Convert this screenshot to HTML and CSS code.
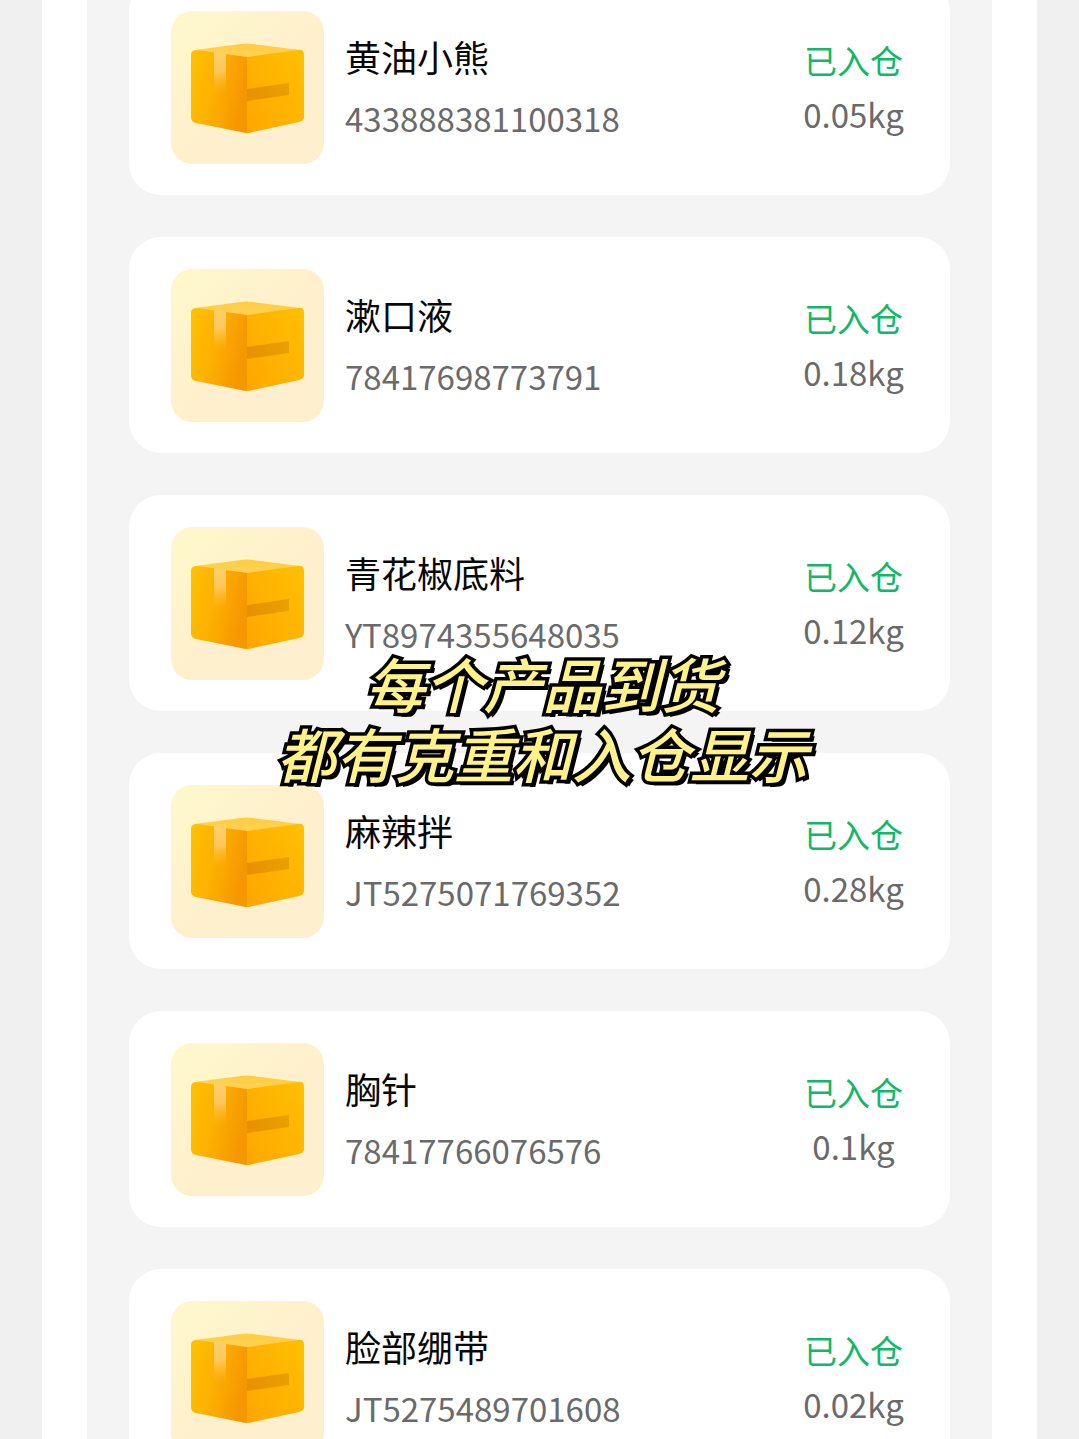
FILE: index.html
```html
<!DOCTYPE html>
<html lang="zh-CN">
<head>
<meta charset="utf-8">
<meta name="viewport" content="width=device-width, initial-scale=1">
<title>包裹列表</title>
<link rel="stylesheet" href="styles.css">
</head>
<body>
<svg class="sprite" aria-hidden="true">
  <defs>
    <linearGradient id="tile" x1="0" y1="0" x2="1" y2="1">
      <stop offset="0" stop-color="#fff8cb"/><stop offset="0.3" stop-color="#fef4cc"/><stop offset="0.55" stop-color="#feefcd"/><stop offset="1" stop-color="#feefd0"/>
    </linearGradient>
    <linearGradient id="left" x1="0" y1="0" x2="1" y2="0.3">
      <stop offset="0" stop-color="#ffc200"/><stop offset="0.5" stop-color="#fdb000"/><stop offset="1" stop-color="#f59800"/>
    </linearGradient>
    <linearGradient id="right" x1="1" y1="0.2" x2="0" y2="1">
      <stop offset="0" stop-color="#ffbe00"/><stop offset="1" stop-color="#ffa600"/>
    </linearGradient>
    <linearGradient id="top" x1="0.6" y1="0" x2="0.35" y2="1">
      <stop offset="0" stop-color="#ffcc40"/><stop offset="1" stop-color="#ffd55c"/>
    </linearGradient>
    <linearGradient id="tape" x1="0" y1="0" x2="0" y2="1">
      <stop offset="0" stop-color="#ffcf70"/><stop offset="0.45" stop-color="#ffcb68" stop-opacity="0.85"/><stop offset="1" stop-color="#fdb515" stop-opacity="0"/>
    </linearGradient>
    <linearGradient id="label" x1="0" y1="0" x2="1" y2="0">
      <stop offset="0" stop-color="#e89000"/><stop offset="1" stop-color="#e9a000"/>
    </linearGradient>
  </defs>
  <symbol id="box" viewBox="0 0 153 153">
    <rect width="153" height="153" rx="21" fill="url(#tile)"/>
    <path d="M24 39L70 33Q76 32 82 33L129 39L76 50Z" fill="url(#top)"/>
    <path d="M76 46V122Q73 122 70 121L25 112Q20 111 20 106V44Q20 39 26 39Z" fill="url(#left)"/>
    <path d="M76 46L127 39Q133 38 133 44V106Q133 110 128 111L82 121Q79 122 76 122Z" fill="url(#right)"/>
    <path d="M43 41L55 43V83H43Z" fill="url(#tape)"/>
    <path d="M76 78L118 72V84L76 90Z" fill="url(#label)"/>
  </symbol>
</svg>
<main class="screen">
  <ul class="parcels">
    <li class="parcel">
      <svg class="thumb" aria-hidden="true"><use href="#box"/></svg>
      <div class="info"><h2 class="name">黄油小熊</h2><p class="code">433888381100318</p></div>
      <div class="state"><p class="status">已入仓</p><p class="weight">0.05kg</p></div>
    </li>
    <li class="parcel">
      <svg class="thumb" aria-hidden="true"><use href="#box"/></svg>
      <div class="info"><h2 class="name">漱口液</h2><p class="code">78417698773791</p></div>
      <div class="state"><p class="status">已入仓</p><p class="weight">0.18kg</p></div>
    </li>
    <li class="parcel">
      <svg class="thumb" aria-hidden="true"><use href="#box"/></svg>
      <div class="info"><h2 class="name">青花椒底料</h2><p class="code">YT8974355648035</p></div>
      <div class="state"><p class="status">已入仓</p><p class="weight">0.12kg</p></div>
    </li>
    <li class="parcel">
      <svg class="thumb" aria-hidden="true"><use href="#box"/></svg>
      <div class="info"><h2 class="name">麻辣拌</h2><p class="code">JT5275071769352</p></div>
      <div class="state"><p class="status">已入仓</p><p class="weight">0.28kg</p></div>
    </li>
    <li class="parcel">
      <svg class="thumb" aria-hidden="true"><use href="#box"/></svg>
      <div class="info"><h2 class="name">胸针</h2><p class="code">78417766076576</p></div>
      <div class="state"><p class="status">已入仓</p><p class="weight">0.1kg</p></div>
    </li>
    <li class="parcel">
      <svg class="thumb" aria-hidden="true"><use href="#box"/></svg>
      <div class="info"><h2 class="name">脸部绷带</h2><p class="code">JT5275489701608</p></div>
      <div class="state"><p class="status">已入仓</p><p class="weight">0.02kg</p></div>
    </li>
  </ul>
</main>
<p class="caption">每个产品到货<br>都有克重和入仓显示</p>
</body>
</html>
```
FILE: styles.css
```css
* {
  box-sizing: border-box;
  margin: 0;
  padding: 0;
}

body {
  background: #f0f0f0;
  font-family: "Noto Sans CJK SC", sans-serif;
}

.sprite {
  position: absolute;
  width: 0;
  height: 0;
}

.screen {
  height: 100vh;
  overflow: hidden;
  margin: 0 42px;
  padding: 0 45px;
  background: #fff;
}

/* The list is scrolled a little, so its first card is cut by the top edge. */
.parcels {
  display: flex;
  flex-direction: column;
  gap: 42px;
  margin-top: -21px;
  padding: 0 42px;
  background: #f4f4f4;
  list-style: none;
}

.parcel {
  display: flex;
  align-items: center;
  gap: 21px;
  padding: 32px 46px 31px 42px;
  border-radius: 32px;
  background: #fff;
}

.thumb {
  flex: none;
  width: 153px;
  height: 153px;
}

.info {
  flex: 1;
  padding-bottom: 2px;
}

.name {
  color: #080808;
  font-size: 36px;
  font-weight: 400;
  line-height: 62px;
}

.code {
  color: #6a6a6a;
  font-size: 33px;
  line-height: 62px;
}

.state {
  min-width: 101px;
  padding-bottom: 2px;
  text-align: center;
}

.status {
  color: #10b868;
  font-size: 33px;
  line-height: 54px;
}

.weight {
  color: #6a6a6a;
  font-size: 33px;
  line-height: 54px;
}

.caption {
  position: fixed;
  inset: 0;
  display: grid;
  place-content: center;
  padding: 0 0 4px 6px;
  color: #fff28a;
  font-size: 59px;
  font-style: italic;
  font-weight: 500;
  line-height: 70px;
  text-align: center;
  -webkit-text-stroke: 7px #000;
  paint-order: stroke fill;
  stroke-linejoin: round;
  text-shadow: 1px 1px #000, 2px 2px #000, 4px 4px #000;
}
```
